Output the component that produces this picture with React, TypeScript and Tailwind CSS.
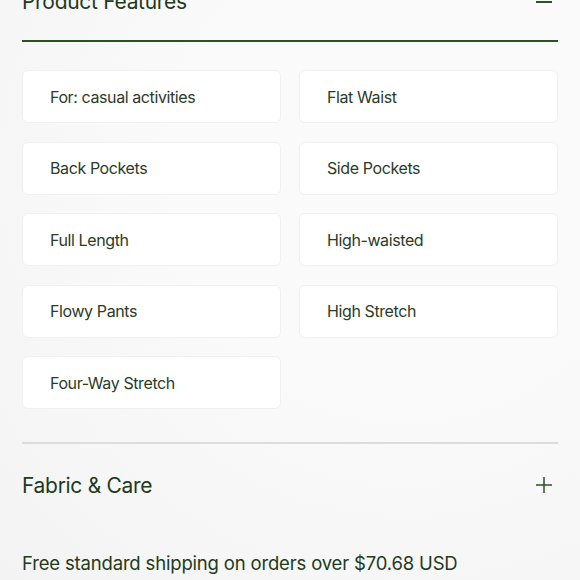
import React from "react";

const features = [
  "For: casual activities",
  "Flat Waist",
  "Back Pockets",
  "Side Pockets",
  "Full Length",
  "High-waisted",
  "Flowy Pants",
  "High Stretch",
  "Four-Way Stretch",
];

export default function App() {
  return (
    <div
      className="w-[580px] h-[580px] overflow-hidden bg-[radial-gradient(ellipse_at_70%_30%,#fafafa_40%,#f3f3f3_100%)] text-[#1f3a1c]"
      style={{ fontFamily: "Inter, 'Noto Sans', sans-serif" }}
    >
      <div className="px-[22px]">
        <div className="flex items-center justify-between -mt-[9px] pb-[28px] border-b-2 border-[#2f4f26]">
          <span className="text-[21px] leading-none tracking-[-0.3px]">Product Features</span>
          <span className="block w-[16px] h-[1.5px] bg-[#2f4f26] mr-[6px] mt-[1px]" />
        </div>
        <div className="grid grid-cols-2 gap-x-[18px] gap-y-[18.5px] pt-[28px]">
          {features.map((f) => (
            <div
              key={f}
              className="h-[53px] bg-white rounded-[6px] border border-[#f0f0f0] flex items-center pl-[27px] text-[16px] tracking-[-0.4px] text-[#2b3b27]"
            >
              {f}
            </div>
          ))}
        </div>
        <div className="mt-[33px] border-t-2 border-[#dcdcdc]" />
        <div className="flex items-center justify-between h-[82px]">
          <span className="text-[21px] leading-none tracking-[-0.3px]">Fabric &amp; Care</span>
          <svg width="18" height="18" viewBox="0 0 18 18" className="mr-[5px]">
            <path d="M9 1v16M1 9h16" stroke="#2f4f26" strokeWidth="1.5" />
          </svg>
        </div>
        <div className="pt-[28px] text-[18.5px] leading-none tracking-[-0.17px] text-[#1f3a1c]">
          Free standard shipping on orders over $70.68 USD
        </div>
      </div>
    </div>
  );
}
